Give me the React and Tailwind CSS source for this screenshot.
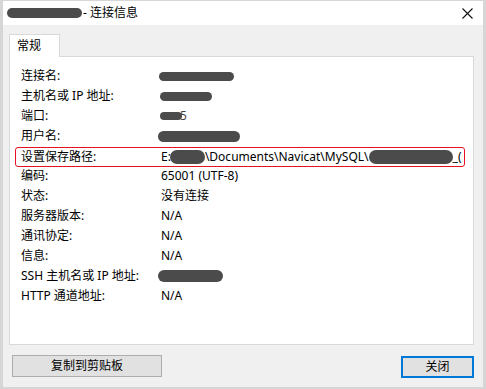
import React from 'react';

// redacted value blob
const Blot = ({ className = "" }) => (
    <span className={`inline-block bg-[#4b4b4b] rounded-full align-middle ${className}`} />
);

const rows = [
    { label: "连接名:", value: <Blot className="w-[75px] h-[9px] ml-[-2px]" /> },
    { label: "主机名或 IP 地址:", value: <Blot className="w-[52px] h-[9px] ml-[-1px]" /> },
    { label: "端口:", value: <span className="flex items-center"><Blot className="w-[22px] h-[8px] ml-[-1px]" /><span className="ml-[-2px] text-[#444]">5</span></span> },
    { label: "用户名:", value: <Blot className="w-[82px] h-[11px] ml-[-3px]" /> },
    {
        label: "设置保存路径:",
        mark: true,
        value: (
            <span className="flex items-center whitespace-nowrap">
                E:<Blot className="w-[35px] h-[14px] ml-[-1px]" />\Documents\Navicat\MySQL\<Blot className="w-[84px] h-[14px]" />
                <span>_(</span>
            </span>
        ),
    },
    { label: "编码:", value: "65001 (UTF-8)" },
    { label: "状态:", value: "没有连接" },
    { label: "服务器版本:", value: "N/A" },
    { label: "通讯协定:", value: "N/A" },
    { label: "信息:", value: "N/A" },
    { label: "SSH 主机名或 IP 地址:", value: <Blot className="w-[65px] h-[12px] ml-[-3px]" /> },
    { label: "HTTP 通道地址:", value: "N/A" },
];

export default function App() {
    return (
        <div className="w-[486px] h-[389px] bg-[#d6d6d6] pt-[1px] pl-[3px] pr-[3px] pb-[2px] text-[12px] text-black font-['Noto_Sans','Noto_Sans_CJK_SC',sans-serif]">
            <div className="h-full flex flex-col bg-[#f0f0f0]">
                {/* title bar */}
                <div className="h-[24px] bg-white flex items-center pl-[4px] pr-[10px] shrink-0">
                    <Blot className="w-[75px] h-[10px]" />
                    <span className="ml-[1px]">- 连接信息</span>
                    <svg className="ml-auto w-[11px] h-[11px]" viewBox="0 0 11 11" stroke="#111" strokeWidth="1.1" fill="none">
                        <path d="M0.5 0.5L10.5 10.5M10.5 0.5L0.5 10.5" />
                    </svg>
                </div>

                {/* tab + panel */}
                <div className="pl-[6px] pr-[9px] pt-[9px]">
                    <div className="relative z-10 w-[51px] h-[23px] bg-white border border-b-0 border-[#d9d9d9] flex items-center pl-[7px] mb-[-1px]">
                        常规
                    </div>
                    <div className="h-[289px] bg-white border border-[#d9d9d9] pl-[11px] pt-[9px]">
                        {rows.map((r) => (
                            <div
                                key={r.label}
                                className={
                                    r.mark
                                        ? "h-[20px] w-[450px] ml-[-6px] pl-[5px] flex items-center border border-[#e81123] rounded-[3px] mt-[1px] mb-[-1px]"
                                        : "h-[20px] flex items-center"
                                }
                            >
                                <span className="w-[140px] shrink-0 whitespace-nowrap">{r.label}</span>
                                <span className="flex items-center">{r.value}</span>
                            </div>
                        ))}
                    </div>
                </div>

                {/* buttons */}
                <div className="flex justify-between items-start pl-[9px] pr-[9px] mt-[10px]">
                    <button className="w-[150px] h-[22px] bg-[#e1e1e1] border border-[#adadad] flex items-center justify-center">
                        复制到剪贴板
                    </button>
                    <button className="w-[73px] h-[22px] mt-[1px] bg-[#e1e1e1] border-2 border-[#0078d7] flex items-center justify-center">
                        关闭
                    </button>
                </div>
            </div>
        </div>
    );
}
